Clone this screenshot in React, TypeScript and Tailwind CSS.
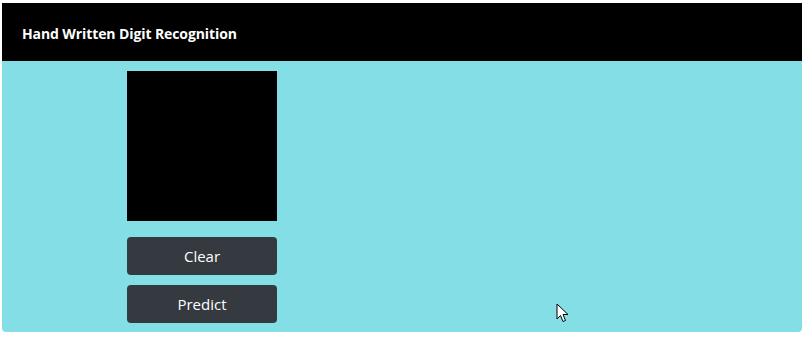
import React from 'react';

const Cursor = () => (
  <svg width="14" height="20" viewBox="0 0 14 20" className="absolute left-[556px] top-[303px]">
    <path d="M1 1 L1 16 L4.5 12.5 L7 18.5 L9.5 17.5 L7 11.5 L12 11.5 Z" fill="#fff" stroke="#000" strokeWidth="1" strokeLinejoin="miter" />
  </svg>
);

const App = () => {
  return (
    <div className="relative w-[810px] h-[337px] bg-white pt-[3px] px-[2px] font-['Open_Sans','Noto_Sans',sans-serif]">
      <div className="w-[800px] rounded-b-[4px] overflow-hidden">
        {/* Header */}
        <header className="h-[58px] bg-black flex items-center px-[20px]">
          <h1 className="text-white text-[14px] font-bold tracking-[-0.1px] pt-[2px]">
            Hand Written Digit Recognition
          </h1>
        </header>

        {/* Body */}
        <main className="h-[271px] bg-[#83dee6] pt-[10px] pl-[125px]">
          <div className="w-[150px] flex flex-col">
            <div className="w-[150px] h-[150px] bg-black"></div>
            <button className="mt-[16px] h-[38px] rounded-[4px] bg-[#343a40] text-white text-[15px]">
              Clear
            </button>
            <button className="mt-[10px] h-[38px] rounded-[4px] bg-[#343a40] text-white text-[15px]">
              Predict
            </button>
          </div>
        </main>
      </div>
      <Cursor />
    </div>
  );
};

export default App;
